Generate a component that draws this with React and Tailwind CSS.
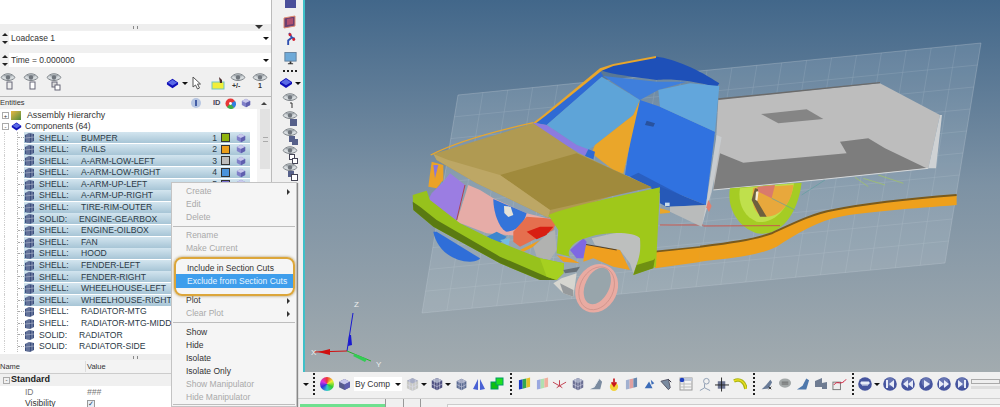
import React from "react";

const F = { fontFamily: '"Liberation Sans", Arial, sans-serif' };

const rows = [
  ["SHELL:", "BUMPER", 1, "#8fb40f", 1],
  ["SHELL:", "RAILS", 2, "#eb9f1c", 1],
  ["SHELL:", "A-ARM-LOW-LEFT", 3, "#bdbdbd", 1],
  ["SHELL:", "A-ARM-LOW-RIGHT", 4, "#4a93dc", 1],
  ["SHELL:", "A-ARM-UP-LEFT", 5, "#7a6fd0", 1],
  ["SHELL:", "A-ARM-UP-RIGHT", 0, "", 1],
  ["SHELL:", "TIRE-RIM-OUTER", 0, "", 1],
  ["SOLID:", "ENGINE-GEARBOX", 0, "", 1],
  ["SHELL:", "ENGINE-OILBOX", 0, "", 1],
  ["SHELL:", "FAN", 0, "", 1],
  ["SHELL:", "HOOD", 0, "", 1],
  ["SHELL:", "FENDER-LEFT", 0, "", 1],
  ["SHELL:", "FENDER-RIGHT", 0, "", 1],
  ["SHELL:", "WHEELHOUSE-LEFT", 0, "", 1],
  ["SHELL:", "WHEELHOUSE-RIGHT", 0, "", 1],
  ["SHELL:", "RADIATOR-MTG", 0, "", 0],
  ["SHELL:", "RADIATOR-MTG-MIDDLE", 0, "", 0],
  ["SOLID:", "RADIATOR", 0, "", 0],
  ["SOLID:", "RADIATOR-SIDE", 0, "", 0],
];

function Cube({ c = "#7f7fc8", s = 11 }) {
  return (
    <svg width={s} height={s} viewBox="0 0 12 12" className="shrink-0">
      <path d="M6 1l5 2.500v5L6 11 1 8.500v-5z" fill={c} />
      <path d="M6 1l5 2.500L6 6 1 3.500z" fill="#c8c8ec" />
      <path d="M6 6l5-2.500v5L6 11z" fill="#5f5fae" />
    </svg>
  );
}
function MeshIcon() {
  return (
    <svg width="11" height="11" viewBox="0 0 11 11" className="shrink-0">
      <path d="M1 3l4-2 5 1v7l-4 2-5-1z" fill="#3d4f7e" />
      <path d="M1 6l9-1M5 1v10M3 2v8M8 2v8" stroke="#aab3c9" strokeWidth=".7" fill="none" />
    </svg>
  );
}
function Eye({ children, w = 16 }) {
  return (
    <svg width={w} height="22" viewBox={`0 0 ${w} 22`} className="shrink-0">
      <path d="M1 5.500c3-5 11-5 14 0-3 4-11 4-14 0z" fill="#d6dbde" stroke="#7f858a" strokeWidth="1" />
      <path d="M3 4c2-2 8-2 10 0-2 1-8 1-10 0z" fill="#9ea5aa" />
      <circle cx="8" cy="5.500" r="2.200" fill="#6f757c" />
      {children}
    </svg>
  );
}
function SolidDiamond({ s = 14 }) {
  return (
    <svg width={s} height={s} viewBox="0 0 14 14" className="shrink-0">
      <path d="M7 2l6 4v2l-6 4-6-4V6z" fill="#1010b8" />
      <path d="M7 3l5 3.200-5 3-5-3z" fill="#5a6ae6" />
    </svg>
  );
}
function Arrow() {
  return <span className="h-0 w-0 shrink-0 border-x-[3px] border-t-[3px] border-x-transparent border-t-[#111]" />;
}
function Bars({ a = "#1e3fc8", b = "#e2c22a", c = "#32a852", w = 13 }) {
  return (
    <svg width={w} height="14" viewBox="0 0 14 14" className="shrink-0">
      <path d="M1 3l4-1v10l-4 1z" fill={a} />
      <path d="M5 2l4-1v10l-4 1z" fill={c} />
      <path d="M9 1l4-1v10l-4 1z" fill={b} />
    </svg>
  );
}
function Box({ c = "#5a6488", s = 15 }) {
  return (
    <svg width={s} height={s} viewBox="0 0 16 16" className="shrink-0">
      <path d="M8 1l6 3v8l-6 3-6-3V4z" fill={c} />
      <path d="M8 1l6 3-6 3-6-3z" fill="#a7adc5" />
      <path d="M2 8l6 3 6-3M8 7v8M5 2.500v11M11 2.500v11" stroke="#dde" strokeWidth=".6" fill="none" />
    </svg>
  );
}
function Nav({ d }) {
  return (
    <svg width="14" height="14" viewBox="0 0 14 14" className="shrink-0">
      <circle cx="7" cy="7" r="6.800" fill="#46559f" />
      <circle cx="7" cy="5" r="4.500" fill="#7c88c0" opacity=".6" />
      <path d={d} fill="#e8ecf8" />
    </svg>
  );
}
const Sep = ({ ml }) => <span className={`h-[22px] w-0 shrink-0 border-l-2 border-dotted border-[#222] ${ml}`} />;

function SideEye({ children }) {
  return <div className="h-[17.5px] shrink-0"><Eye w={17}>{children}</Eye></div>;
}

function SideBar() {
  return (
    <div className="flex w-[31px] shrink-0 flex-col items-center bg-[#f0f0f0] pl-[5px]">
      <div className="h-[8px] w-[11px] bg-[#4a4f9a]" />
      <div className="mt-[7px] flex h-[13px] items-center">
        <svg width="14" height="14" viewBox="0 0 14 14"><path d="M1 3l11-2v10L1 13z" fill="#6a3f70" stroke="#e08a70" /><path d="M4 4l6-1v6l-6 1z" fill="#b05070" /></svg>
      </div>
      <div className="mt-[4px] flex h-[13px] items-center">
        <svg width="13" height="14" viewBox="0 0 13 15"><path d="M5 1l3 5-4 3v5M8 6l3 1" stroke="#3050b0" strokeWidth="2" fill="none" /><circle cx="6" cy="3" r="1.600" fill="#d02030" /><circle cx="10" cy="8" r="1.600" fill="#d02030" /></svg>
      </div>
      <div className="mt-[7px] flex h-[12px] items-center">
        <svg width="13" height="13" viewBox="0 0 14 15"><rect x=".5" y=".5" width="13" height="10" fill="#6eaad8" stroke="#607c98" /><path d="M4 14h6v-1H8v-2H6v2H4z" fill="#333" /></svg>
      </div>
      <div className="mt-[6px] h-0 w-[14px] border-t-2 border-dotted border-[#222]" />
      <div className="mt-[4px] flex items-center gap-[2px]"><SolidDiamond /><Arrow /></div>
      <div className="mt-[2px] flex flex-col items-center">
        <SideEye><path d="M8 11h2v5" stroke="#333" fill="none" /></SideEye>
        <SideEye><rect x="8" y="9" width="7" height="7" fill="#56608a" /></SideEye>
        <SideEye><rect x="7" y="9" width="6" height="6" fill="#56608a" /><rect x="10" y="12" width="6" height="6" fill="#56608a" /></SideEye>
        <SideEye><rect x="7.500" y="9.500" width="5" height="5" fill="#fff" stroke="#445" /><rect x="10.500" y="13.500" width="5" height="5" fill="#fff" stroke="#445" /></SideEye>
        <SideEye><rect x="6" y="9" width="6" height="6" fill="#56608a" /><rect x="9.500" y="12.500" width="6" height="6" fill="#fff" stroke="#445" /></SideEye>
      </div>
    </div>
  );
}

function Combo({ text, mt }) {
  return (
    <div className={`flex h-[14px] shrink-0 items-center ${mt}`}>
      <div className="flex w-[9px] shrink-0 flex-col items-center gap-[5px]">
        <span className="border-x-[3px] border-b-[3px] border-x-transparent border-b-[#222]" />
        <span className="border-x-[3px] border-t-[3px] border-x-transparent border-t-[#222]" />
      </div>
      <div className="flex h-[14px] flex-1 items-center justify-between bg-white pl-[2px] pr-[2px] text-[8.500px] text-[#333]">
        <span>{text}</span>
        <Arrow />
      </div>
    </div>
  );
}

function Row({ r }) {
  const [k, n, id, c, sel] = r;
  const solid = k === "SOLID:";
  return (
    <div className="flex h-[11.6px] items-center pl-[4px]">
      <span className="h-full w-[13px] shrink-0 border-l border-dotted border-[#cfcfcf]" />
      <span className="h-full w-0 shrink-0 border-l border-dotted border-[#bbb]" />
      <span className="h-0 w-[6px] shrink-0 border-t border-dotted border-[#aaa]" />
      <div className={`flex h-[11px] flex-1 items-center text-[8.600px] leading-none text-[#2b3a46] ${sel ? "bg-gradient-to-b from-[#d3e5ef] to-[#a7c5d6]" : ""}`}>
        <MeshIcon />
        <span className="ml-[4px] w-[42px] shrink-0">{k}</span>
        <span className={`${solid ? "-ml-[2px]" : ""} flex-1 whitespace-nowrap`}>{n}</span>
        {id > 0 && (
          <>
            <span className="w-[8px] shrink-0 text-right">{id}</span>
            <span className="ml-[4px] h-[9px] w-[9px] shrink-0 border border-[#333]" style={{ background: c }} />
            <span className="ml-[6px] mr-[4px]"><Cube s={10} /></span>
          </>
        )}
      </div>
    </div>
  );
}

function Tick() {
  return <span className="h-[3px] w-[5px] border-x border-[#888]" />;
}

function LeftPanel() {
  return (
    <div className="flex w-[272px] shrink-0 flex-col border-r border-[#bbb] bg-[#f0f0f0]">
      <div className="h-[24px] shrink-0 bg-white" />
      <div className="relative flex h-[6px] shrink-0 items-center justify-center bg-[#eeeeee]">
        <Tick />
        <span className="absolute right-[8px] top-[1px] border-x-[4px] border-t-[4px] border-x-transparent border-t-[#333]" />
      </div>
      <Combo text="Loadcase 1" mt="mt-[1px]" />
      <Combo text="Time = 0.000000" mt="mt-[8px]" />
      <div className="flex h-[29px] shrink-0 items-center pr-[3px] pt-[3px]">
        <div className="flex gap-[7px]">
          <Eye w={16}><rect x="7" y="10" width="5" height="7" fill="#eee" stroke="#667" /></Eye>
          <Eye w={16}><rect x="7" y="10" width="5" height="7" fill="#fff" stroke="#667" /></Eye>
          <Eye w={16}><rect x="6" y="10" width="5" height="5" fill="#ddd" stroke="#667" /><rect x="9" y="13" width="5" height="5" fill="#fff" stroke="#667" /></Eye>
        </div>
        <div className="ml-auto flex items-center">
          <SolidDiamond s={13} />
          <span className="ml-[3px] flex"><Arrow /></span>
          <svg width="12" height="15" viewBox="0 0 12 15" className="ml-[3px]"><path d="M2 1v10l2.500-2 2 4 2-1-2-4h3z" fill="#fff" stroke="#555" /></svg>
          <svg width="15" height="14" viewBox="0 0 15 14" className="ml-[8px]"><rect x="1" y="6" width="12" height="7" fill="#f2ee3a" stroke="#6fc6c0" /><path d="M8 1l3 3v3H9z" fill="#4c2a2a" /></svg>
          <div className="relative ml-[4px] h-[22px] w-[16px]">
            <Eye w={16} />
            <span className="absolute left-[2px] top-[10px] text-[7px] font-bold leading-none text-[#333]">+/-</span>
          </div>
          <div className="relative ml-[6px] h-[22px] w-[16px]">
            <Eye w={16} />
            <span className="absolute left-[6px] top-[10px] text-[7px] font-bold leading-none text-[#333]">1</span>
          </div>
        </div>
      </div>
      <div className="flex h-[13px] shrink-0 items-center border-t border-[#bbb] pr-[4px] text-[7.500px] text-[#333]">
        <span>Entities</span>
        <svg width="12" height="12" viewBox="0 0 12 12" className="ml-auto mr-[11px]"><circle cx="6" cy="6" r="5" fill="#b7c6e2" /><path d="M6 3v6" stroke="#1c3a90" strokeWidth="1.500" /></svg>
        <span className="w-[12px] text-[7.500px] font-bold text-[#445]">ID</span>
        <svg width="11" height="11" viewBox="0 0 11 11"><circle cx="5.500" cy="5.500" r="5" fill="#e83838" /><path d="M5.500 5.500L10 3a5 5 0 0 1-1 7z" fill="#2f7fe0" /><path d="M5.500 5.500L9 10a5 5 0 0 1-7-1z" fill="#38b048" /><circle cx="5.500" cy="5.500" r="1.400" fill="#fff" /></svg>
        <span className="ml-[5px] mr-[10px]"><Cube s={10} /></span>
        <span className="border-x-[3px] border-b-[3px] border-x-transparent border-b-[#444]" />
      </div>
      <div className="flex min-h-0 flex-1">
        <div className="min-w-0 flex-1 bg-white pr-[7px] pt-[1px]">
          <div className="flex h-[11.500px] items-center pl-[2px] text-[8.800px] text-[#333]">
            <span className="mr-[2px] flex h-[7px] w-[7px] items-center justify-center border border-[#aaa] text-[6px] leading-none">+</span>
            <span className="mr-[4px] h-[9px] w-[10px] bg-gradient-to-br from-[#e8b840] to-[#4a8a3a]" />
            <span className="ml-[2px]">Assembly Hierarchy</span>
          </div>
          <div className="flex h-[10.500px] items-center pl-[2px] text-[8.500px] text-[#333]">
            <span className="mr-[2px] flex h-[7px] w-[7px] items-center justify-center border border-[#aaa] text-[6px] leading-none">-</span>
            <span className="mr-[3px]"><SolidDiamond s={11} /></span>
            <span>Components (64)</span>
          </div>
          {rows.map((r) => <Row key={r[1]} r={r} />)}
        </div>
        <div className="w-[14px] shrink-0 bg-[#f4f4f4]">
          <div className="ml-[3px] flex h-[60px] w-[10px] items-center justify-center bg-[#e2e2e2]">
            <span className="h-[5px] w-[5px] border-y border-[#aaa]" />
          </div>
        </div>
      </div>
      <div className="flex h-[6px] shrink-0 items-center justify-center bg-[#eeeeee]"><Tick /></div>
      <div className="flex h-[14px] shrink-0 items-center border-b border-[#ccc] bg-[#f3f3f3] text-[7.500px] text-[#333]">
        <span className="w-[86px] border-r border-[#ddd]">Name</span>
        <span className="pl-[1px]">Value</span>
      </div>
      <div className="flex h-[12px] shrink-0 items-center pl-[3px] text-[9px] font-bold text-[#222]">
        <span className="mr-[1px] flex h-[7px] w-[7px] items-center justify-center border border-[#aaa] text-[6px] font-normal leading-none">-</span>
        Standard
      </div>
      <div className="flex h-[12px] shrink-0 items-center bg-white text-[8.500px] text-[#777]">
        <span className="w-[87px] pl-[25px]">ID</span>
        <span className="italic">###</span>
      </div>
      <div className="flex h-[9px] shrink-0 items-center bg-white pt-[2px] text-[8.500px] text-[#333]">
        <span className="w-[87px] pl-[25px]">Visibility</span>
        <span className="flex h-[8px] w-[8px] items-center justify-center border border-[#999] bg-[#e8eef5] text-[7px] leading-none text-[#246]">✓</span>
      </div>
    </div>
  );
}

function planeGrid() {
  const lines = [];
  const P = [[458, 95], [981, 43], [945, 263], [422, 313]];
  const lerp = (a, b, t) => [a[0] + (b[0] - a[0]) * t, a[1] + (b[1] - a[1]) * t];
  for (let i = 1; i < 21; i++) {
    const a = lerp(P[0], P[1], i / 21), b = lerp(P[3], P[2], i / 21);
    lines.push(<line key={"v" + i} x1={a[0]} y1={a[1]} x2={b[0]} y2={b[1]} />);
  }
  for (let i = 1; i < 10; i++) {
    const a = lerp(P[0], P[3], i / 10), b = lerp(P[1], P[2], i / 10);
    lines.push(<line key={"h" + i} x1={a[0]} y1={a[1]} x2={b[0]} y2={b[1]} />);
  }
  return lines;
}

function Viewport() {
  return (
    <div className="relative min-h-0 flex-1 border-l-2 border-[#3fc0c8] bg-gradient-to-b from-[#42678a] via-[#7d92a4] to-[#a2abaf]">
      <svg viewBox="305 0 695 372" className="block h-full w-full" preserveAspectRatio="none">
        <path d="M458 95L981 43 945 263 422 313z" fill="#dfe9f0" fillOpacity=".15" stroke="#c3ced6" strokeOpacity=".4" strokeWidth=".8" />
        <g stroke="#e4ecf2" strokeWidth=".6" opacity=".2">{planeGrid()}</g>

        {/* rear part, traced in a 3x space anchored at (700,20) */}
        <g transform="translate(700 20) scale(.3333)">
          <path d="M55 238L540 190 720 285 685 445 370 478 40 510z" fill="#bdbdbd" />
          <path d="M55 235L540 186v4L55 240z" fill="#6b6b6b" />
          <path d="M183 282l137-14 50 29-135 13z" fill="#858585" />
          <path d="M40 510l20-110 70 28 310-28-20-35 85-10 50 30 125 60-310 33z" fill="#7d7d7d" />
          <path d="M720 285h6l-18 160h-23z" fill="#cfd2d4" />
          <path d="M40 510L370 478 685 445" fill="none" stroke="#d5d8da" strokeWidth="3" />
          <path d="M90 505c-10 55 20 115 80 135 60 10 120-40 135-152z" fill="#a5cc24" />
          <path d="M120 505c-8 40 10 85 50 100 50 10 100-40 112-115z" fill="#bfe04c" />
          <path d="M160 503c-10 57 10 87 40 87 40 0 75-40 80-95z" fill="#e8a83c" />
          <path d="M165 505l-10 35 25 50h20l-30-50 5-33z" fill="#6d5f3e" />
          <path d="M168 515l8-2-4 30-6-4z" fill="#f4ecd7" />
          <path d="M172 500l53-5-10 40-40-20z" fill="#d97a6c" />
          <path d="M215 535l70 35M305 525l70-45" stroke="#5f9fa0" strokeWidth="2" fill="none" />
          <path d="M465 472l40 28M490 475l65 20M535 465l75 25" stroke="#a4c85a" strokeWidth="2" fill="none" />
          <path d="M10 618L240 617" stroke="#c8574e" strokeWidth="3" />
          <path d="M0 680c80-10 160-20 215-40 65-30 125-60 185-70 100-20 240-35 370-45v30c-130 10-270 20-350 35-60 10-130 50-190 90-60 30-150 35-230 45z" fill="#eea01c" />
          <path d="M0 680c80-10 160-20 215-40 65-30 125-60 185-70 100-20 240-35 370-45" fill="none" stroke="#7a5a1c" strokeWidth="6" />
        </g>

        {/* front part, traced in a 3x space anchored at (400,50) */}
        <g transform="translate(400 50) scale(.3333)">
          <path d="M780 525H910" stroke="#c8574e" strokeWidth="3" />
          <path d="M765 605L900 591v45L765 655z" fill="#eea01c" />
          <path d="M765 605L900 591" stroke="#7a5a1c" strokeWidth="5" />

          {/* cab */}
          <path d="M720 150L780 170 945 245 918 465 780 410 675 375 700 210z" fill="#3072e0" />
          <path d="M600 60c40-20 110-30 170-40 50 5 130 40 188 80l-8 12c-70-22-150-27-180-22-70-10-130-15-170-30z" fill="#1e50b8" />
          <path d="M405 218L600 62l10 16L440 225z" fill="#2f6ad4" />
          <path d="M400 218l30-23L600 55l40-13 128-24v6L640 48l-35 14L440 195l-35 27z" fill="#e8a62c" />
          <path d="M440 225L605 80l115 70-20 45-115 90-20 15-35-15z" fill="#5ea4d8" />
          <path d="M610 78l160 17h90l-85 25-55 30z" fill="#3f7fdc" />
          <path d="M775 120l95-20 88 8-13 137-165-75z" fill="#62a6dc" />
          <path d="M720 150l-20 45-115 90-10 25 65 50 30 12z" fill="#eaa62a" />
          <path d="M740 212l25 8-5 10-25-5z" fill="#28529f" />
          <path d="M690 380l25-12 185 97-120-35z" fill="#2a5fc0" />
          <path d="M780 410l138 55-118 5-20-10z" fill="#2659b8" />
          <path d="M810 470l110-5-15 65-95-45z" fill="#b9bbbb" />
          <path d="M950 255l15 7-30 163-30 105 13-65z" fill="#c8cccf" />
          <path d="M780 475l30 8v5l-30 3z" fill="#eaa62a" />
          <path d="M925 450l10 18-8 18-8-14z" fill="#e08070" />
          <path d="M795 458h14v10h-14z" fill="#c7dbe9" />
          <path d="M400 218l40 7 90 60 35 13-10 20-155-86z" fill="#8c7be0" />
          <path d="M565 298l20 7-5 23-25-10z" fill="#2f6ad4" />

          {/* engine bay */}
          <path d="M95 335l35 10v45l-20 25-25-5z" fill="#eaa228" />
          <path d="M100 345h15l-10 40z" fill="#8877dd" />
          <path d="M125 395l10 10-10 33-15-8z" fill="#5fa9dd" />
          <path d="M80 460l15-30 35-35 20-25 45 35-25 105-60-30z" fill="#9b7de2" />
          <path d="M205 405l35 15 40 25 100 45 60 15 30 5-90 50-120-10-90-35z" fill="#e6aca7" />
          <path d="M195 405l-25 105" stroke="#b04050" strokeWidth="3" />
          <path d="M280 447l100 43c-10 40-40 55-60 55-20-5-40-55-40-98z" fill="#3474da" />
          <path d="M312 468l20 2 8 25-15 6-12-12z" fill="#e5e2d8" />
          <path d="M340 545l40-45 60 5 30 5-10 30-60 30-40 20-20-15z" fill="#e56f4e" />
          <path d="M380 545l40-15h40l-20 25-30 13z" fill="#d81e12" />
          <path d="M260 560l30-15 30 15-20 20z" fill="#3e86ce" />
          <path d="M300 570l30-5-5 25z" fill="#75bce0" />
          <path d="M360 600l60-30-20 20-30 15z" fill="#ef9f1f" />
          <path d="M400 590l45-40 20-10 5 60-20 30-40-10z" fill="#b1b2b0" />

          {/* front tyre */}
          <path d="M100 545c10 55 60 90 110 90 20 0 30-7 30-10L110 545z" fill="#2f6ed8" />

          {/* hood */}
          <path d="M100 312L400 220 535 310 755 412 660 430 445 503 230 400 110 330z" fill="#b09a52" />
          <path d="M300 375L530 310 755 412 450 480z" fill="#a08a3c" />
          <path d="M100 312l45 18 155 45 150 105-5 23-215-103-120-70z" fill="#bda765" />
          <path d="M92 315C180 270 300 240 400 218" fill="none" stroke="#e8a62c" strokeWidth="4" />

          {/* wheel arch */}
          <path d="M575 565l65-15 60-5 22 20v45l-22 60-10-30-30-40-75-15z" fill="#bdbfbe" />
          <path d="M555 585l45 5 60 10 30 60-50-10-60-25-30 10z" fill="#ef9f1f" />
          <path d="M555 583l95 17" stroke="#4f3f2a" strokeWidth="3" />
          <path d="M510 600l40-35 10 10-10 50h-20z" fill="#7e68e2" />
          <path d="M470 615l40 10 30 15-50-5z" fill="#ef9f1f" />

          {/* fender */}
          <path d="M445 495c75-30 255-65 335-83l-12 238-68 25c10-35 25-55 20-110-15-20-100-20-150-5l-30 10c-30 15-40 40-30 50l-40-10 5-70z" fill="#9fc81a" />
          <path d="M700 675l60-20 5-30-5 5-50 15z" fill="#6f9012" />

          {/* bumper */}
          <path d="M38 435l42-13 10 28 90 70 90 45 150 60 72 15-2 30-20 20h-50L300 640 100 530 40 480z" fill="#97c21c" />
          <path d="M38 455l2 25 60 50 200 110 120 50h50l-30-10-140-60L110 510 60 470z" fill="#5a7a12" />
          <path d="M420 625l72 15-2 30-20 20-30-10z" fill="#a6d020" />

          {/* under-body and rim */}
          <path d="M490 660l50-10-10 15-35 5z" fill="#667078" />
          <path d="M460 700l25-15 45-15-10 70-30-10z" fill="#d6d6d0" />
          <path d="M480 700l40 20v20l-30-10z" fill="#969a9c" />
          <ellipse cx="590" cy="715" rx="62" ry="75" transform="rotate(25 590 715)" fill="#e9aba2" />
          <ellipse cx="592" cy="708" rx="36" ry="58" transform="rotate(25 592 708)" fill="#98a5ab" />
          <ellipse cx="590" cy="715" rx="50" ry="67" transform="rotate(25 590 715)" fill="none" stroke="#c98d85" strokeWidth="2" />
        </g>

        {/* triad */}
        <path d="M347 351l6-38" stroke="#1a1ad0" strokeWidth="1" />
        <path d="M349 335l2 0 1 10-4 1z" fill="#1a1ad0" />
        <path d="M347 351l-33 1" stroke="#d01010" strokeWidth="1" />
        <path d="M330 349l-12 3 12 3z" fill="#d01010" />
        <path d="M347 351l24 10" stroke="#26b526" strokeWidth="1" />
        <path d="M355 354l12 5-2 3-12-6z" fill="#33cc55" />
      </svg>
      <span className="absolute left-[49px] top-[299px] text-[8px] text-[#eee]">Z</span>
      <span className="absolute left-[6px] top-[347px] text-[8px] text-[#eee]">X</span>
      <span className="absolute left-[71px] top-[359px] text-[8px] text-[#eee]">Y</span>
    </div>
  );
}

function BottomBar() {
  const nav = ["M3 3h2v8H3zM11 3v8L6 7z", "M2 7l5-4v8zM7 7l5-4v8z", "M5 3l6 4-6 4z", "M2 3l5 4-5 4zM7 3l5 4-5 4z", "M3 3l5 4-5 4zM9 3h2v8H9z"];
  return (
    <div className="flex h-[26px] shrink-0 items-center bg-[#f0f0f0] pb-[2px] pl-[31px]">
      <Arrow />
      <Sep ml="ml-[4px]" />
      <span className="ml-[5px] h-[14px] w-[14px] shrink-0 rounded-full bg-[conic-gradient(#e33,#ee3,#3c3,#3cc,#33d,#d3d,#e33)]" />
      <span className="ml-[4px] flex"><Cube c="#565a8c" s={13} /></span>
      <div className="ml-[3px] flex h-[14px] w-[48px] shrink-0 items-center justify-between bg-white pl-[1px] pr-[1px] text-[8.500px] text-[#333]">
        By Comp <Arrow />
      </div>
      <span className="ml-[3px] flex"><Box c="#c9cac6" s={15} /></span>
      <span className="ml-[1px] flex"><Arrow /></span>
      <span className="ml-[3px] flex"><Box c="#4d4f80" s={14} /></span>
      <span className="ml-[1px] flex"><Arrow /></span>
      <span className="ml-[4px] flex"><Box c="#5c6c92" s={13} /></span>
      <svg width="14" height="14" viewBox="0 0 14 14" className="ml-[4px] shrink-0"><path d="M1 12l5-10v11zM8 2l5 10-5 1z" fill="#4a62d4" /></svg>
      <svg width="14" height="14" viewBox="0 0 14 14" className="ml-[4px] shrink-0"><rect x="1" y="5" width="7" height="7" fill="#0fc00f" stroke="#096" /><rect x="6" y="1" width="7" height="7" fill="#20e020" stroke="#096" /></svg>
      <Sep ml="ml-[6px]" />
      <span className="ml-[6px] flex"><Bars /></span>
      <span className="ml-[5px] flex"><Bars a="#9aa8e0" b="#f0b0a0" c="#b0e0b0" /></span>
      <svg width="15" height="14" viewBox="0 0 16 14" className="ml-[3px] shrink-0"><path d="M1 5l7 4 7-4M8 9V3M5 11l3-2 3 2" fill="none" stroke="#c03a4a" /></svg>
      <span className="ml-[4px] flex"><Box c="#6a6e92" s={14} /></span>
      <svg width="14" height="14" viewBox="0 0 15 15" className="ml-[4px] shrink-0"><path d="M1 13l5-2 5-9 3 3-2 8z" fill="#7a8ba0" /><path d="M5 11l6-9" stroke="#dfe3e8" /></svg>
      <svg width="12" height="15" viewBox="0 0 13 15" className="ml-[5px] shrink-0"><circle cx="6.500" cy="10" r="4.500" fill="#f3d33a" /><path d="M6.500 1v8M4 5l2.500 4L9 5" stroke="#c8141c" strokeWidth="1.800" fill="none" /></svg>
      <span className="ml-[5px] flex"><Bars a="#a0b0d0" b="#6a88b0" c="#e0a0a0" /></span>
      <svg width="13" height="14" viewBox="0 0 15 14" className="ml-[5px] shrink-0"><path d="M2 12l5-8 4 8zM9 2l4 4-3 2z" fill="#3c6cb8" /></svg>
      <svg width="14" height="15" viewBox="0 0 15 15" className="ml-[4px] shrink-0"><path d="M1 4l8 9 2-2-2-9z" fill="#7a8ba0" stroke="#556" /><path d="M9 2l3 3" stroke="#223" /></svg>
      <svg width="14" height="14" viewBox="0 0 14 14" className="ml-[5px] shrink-0"><rect x="1" y="1" width="12" height="12" fill="#f4f4f4" stroke="#999" /><rect x="1" y="1" width="12" height="3" fill="#c0c8d8" /><path d="M1 7h12M1 10h12M5 4v9" stroke="#bbb" /><circle cx="3" cy="3" r="2.300" fill="#2040c0" /></svg>
      <svg width="14" height="15" viewBox="0 0 15 15" className="ml-[5px] shrink-0"><circle cx="9" cy="4" r="3" fill="none" stroke="#8a9ab0" /><path d="M7 7v4l-5 3M7 11l6 3" fill="none" stroke="#8a9ab0" /></svg>
      <svg width="14" height="15" viewBox="0 0 15 15" className="ml-[3px] shrink-0"><rect x="3" y="4" width="8" height="8" fill="#6b7390" /><path d="M7 0v15M0 8h15" stroke="#222" /></svg>
      <svg width="14" height="14" viewBox="0 0 14 14" className="ml-[4px] shrink-0"><path d="M1 4c6-3 11 1 12 8" fill="none" stroke="#a9b514" strokeWidth="3.500" /><path d="M1 4c6-3 11 1 12 8" fill="none" stroke="#f0e020" strokeWidth="1.200" /></svg>
      <Sep ml="ml-[6px]" />
      <svg width="13" height="15" viewBox="0 0 15 15" className="ml-[5px] shrink-0"><path d="M2 13l5-5 5-6 2 3-4 7z" fill="#6a7c98" /><path d="M10 10l3 3m0-3l-3 3" stroke="#222" /></svg>
      <svg width="14" height="14" viewBox="0 0 15 14" className="ml-[5px] shrink-0"><ellipse cx="7.500" cy="6" rx="6.500" ry="5" fill="#a3a8a8" /><path d="M4 5h7M4 7h7" stroke="#666" /></svg>
      <svg width="14" height="14" viewBox="0 0 15 14" className="ml-[4px] shrink-0"><path d="M1 13l6-4 4-8 3 2-3 10z" fill="#4e78ac" /></svg>
      <svg width="15" height="14" viewBox="0 0 15 14" className="ml-[3px] shrink-0"><path d="M2 4l7-3v9H2zM9 6l5-1v7H9z" fill="#6f7c92" /></svg>
      <svg width="15" height="14" viewBox="0 0 16 14" className="ml-[4px] shrink-0"><rect x="1" y="5" width="8" height="8" fill="#eee" stroke="#777" /><path d="M2 8c4-6 7 2 13-6" fill="none" stroke="#d01030" /></svg>
      <Sep ml="ml-[5px]" />
      <svg width="14" height="14" viewBox="0 0 14 14" className="ml-[4px] shrink-0"><circle cx="7" cy="7" r="6.800" fill="#46559f" /><path d="M3 5h8v2H3zM4 8h6" stroke="#e8ecf8" fill="#e8ecf8" /></svg>
      <span className="ml-[2px] flex"><Arrow /></span>
      <div className="ml-[3px] flex gap-[4px]">{nav.map((d) => <Nav key={d} d={d} />)}</div>
      <div className="ml-[2px] w-[29px] shrink-0">
        <div className="h-[5px] border border-[#aaa] bg-[#eee]" />
        <div className="mt-[2px] h-[3px] bg-[#ddd]" />
      </div>
    </div>
  );
}

const Item = ({ children, off, arrow }) => (
  <div className={`flex h-[13px] items-center justify-between pl-[14px] pr-[6px] text-[8.500px] ${off ? "text-[#a9a9a9]" : "text-[#333]"}`}>
    <span className="whitespace-nowrap">{children}</span>
    {arrow && <span className="border-y-[3px] border-l-[3px] border-y-transparent border-l-[#333]" />}
  </div>
);
const Line = ({ className = "my-[2px]" }) => <div className={`mx-[1px] h-0 border-t border-[#bdbdbd] ${className}`} />;

function Menu() {
  return (
    <div className="absolute left-[171px] top-[182px] z-10 h-[225px] w-[126px] border border-[#c4c4c4] bg-[#f5f5f5] pt-[2px] shadow-[1px_1px_1px_#888]">
      <Item off arrow>Create</Item>
      <Item off>Edit</Item>
      <Item off>Delete</Item>
      <Line />
      <Item off>Rename</Item>
      <Item off>Make Current</Item>
      <div className="relative z-10 -mb-[2px] ml-[2px] mr-[1px] mt-[2px] h-[39px] rounded-[8px] border-2 border-[#dca63a] shadow-[0_0_3px_#a98f55]">
        <div className="flex h-[15px] items-center pl-[11px] pt-[3px] text-[8.500px] text-[#333]">Include in Section Cuts</div>
        <div className="flex h-[14px] items-center bg-[#3e9eec] pl-[11px] text-[8.500px] text-[#e8f4ff]">Exclude from Section Cuts</div>
      </div>
      <Item arrow>Plot</Item>
      <Item off arrow>Clear Plot</Item>
      <Line className="mb-[3px] mt-[2px]" />
      <Item>Show</Item>
      <Item>Hide</Item>
      <Item>Isolate</Item>
      <Item>Isolate Only</Item>
      <Item off>Show Manipulator</Item>
      <Item off>Hide Manipulator</Item>
      <Line className="mt-0" />
    </div>
  );
}

export default function App() {
  return (
    <div className="relative flex h-[407px] w-[1000px] overflow-hidden bg-[#f0f0f0]" style={F}>
      <LeftPanel />
      <div className="flex min-w-0 flex-1 flex-col">
        <div className="flex h-[372px] shrink-0">
          <SideBar />
          <Viewport />
        </div>
        <BottomBar />
        <div className="flex flex-1 items-end border-t border-[#d0d0d0] bg-[#f0f0f0]">
          <div className="ml-[28px] h-[3px] w-[85px] bg-[#6fe08f]" />
          <span className="h-[8px] w-[18px] border-l border-[#999]" />
          <span className="h-[8px] w-[17px] border-l border-[#999]" />
          <span className="h-[8px] w-[27px] border-l border-[#999]" />
          <div className="h-[3px] flex-1 border-l border-t border-[#ccc] bg-[#f8f8f8]" />
        </div>
      </div>
      <Menu />
    </div>
  );
}
